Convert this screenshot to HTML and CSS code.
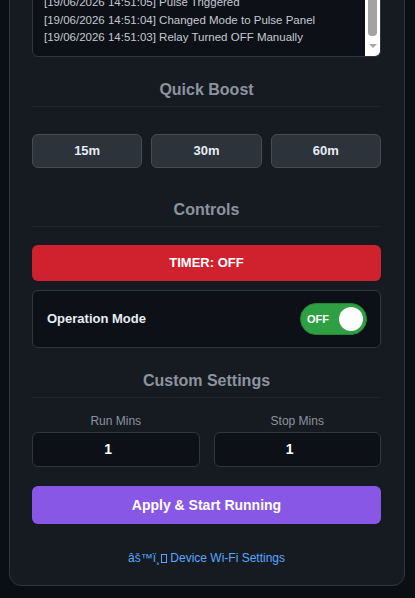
FILE: index.html
```html
<!DOCTYPE html>
<html lang="en">
<head>
<meta charset="utf-8">
<title>Pulse Panel</title>
<link rel="stylesheet" href="styles.css">
</head>
<body>
<div class="card">
  <h1 class="title">Pulse Panel Controller</h1>
  <div class="status">Relay: <b>OFF</b> &middot; Mode: Pulse Panel</div>
  <h2 class="heading">Activity Log</h2>
  <div class="log">
    <div class="log-lines">
      <div>[19/06/2026 14:51:09] Pulse Triggered</div>
      <div>[19/06/2026 14:51:08] Pulse Triggered</div>
      <div>[19/06/2026 14:51:07] Pulse Triggered</div>
      <div>[19/06/2026 14:51:06] Pulse Triggered</div>
      <div>[19/06/2026 14:51:05] Pulse Triggered</div>
      <div>[19/06/2026 14:51:04] Changed Mode to Pulse Panel</div>
      <div>[19/06/2026 14:51:03] Relay Turned OFF Manually</div>
    </div>
    <div class="sbar"><div class="thumb"></div><div class="arrow"></div></div>
  </div>

  <h2 class="heading">Quick Boost</h2>
  <div class="boost">
    <button class="btn">15m</button>
    <button class="btn">30m</button>
    <button class="btn">60m</button>
  </div>

  <h2 class="heading">Controls</h2>
  <button class="timer">TIMER: OFF</button>
  <div class="mode">
    <span class="mode-label">Operation Mode</span>
    <div class="toggle"><span class="toggle-text">OFF</span><span class="knob"></span></div>
  </div>

  <h2 class="heading">Custom Settings</h2>
  <div class="fields">
    <label class="field"><span class="field-label">Run Mins</span><input class="input" type="number" value="1"></label>
    <label class="field"><span class="field-label">Stop Mins</span><input class="input" type="number" value="1"></label>
  </div>
  <button class="apply">Apply &amp; Start Running</button>
  <a class="wifi" href="#">âš™ï¸<span class="tofu"></span> Device Wi-Fi Settings</a>
</div>
<script src="app.js"></script>
</body>
</html>
```
FILE: styles.css
```css
* { box-sizing: border-box; }
html, body { margin: 0; }
body {
  background: #0b0e13;
  font-family: "Liberation Sans", Arial, sans-serif;
  color: #c9d1d9;
  padding: 12px 0 12px 9px;
}
.card {
  width: 396px;
  background: #161b22;
  border: 1px solid #30363d;
  border-radius: 12px;
  padding: 16px 23px 20px 22px;
  display: flex;
  flex-direction: column;
}
.title { margin: 0 0 8px; font-size: 20px; text-align: center; color: #e6edf3; }
.status { text-align: center; font-size: 13px; color: #8b949e; margin-bottom: 8px; }
.heading {
  margin: 23px 0 0;
  font-size: 16px;
  line-height: 19px;
  font-weight: bold;
  color: #8b949e;
  text-align: center;
  padding-bottom: 7px;
  border-bottom: 1px solid #21262d;
}
.log {
  margin-top: 18px;
  display: flex;
  background: #0d1117;
  border: 1px solid #30363d;
  border-radius: 6px;
  overflow: hidden;
}
.log-lines {
  flex: 1;
  padding: 6px 10px 9px 11px;
  font-size: 11.5px;
  line-height: 17.5px;
  color: #c4c9d0;
}
.sbar {
  width: 15px;
  background: #fff;
  display: flex;
  flex-direction: column;
  align-items: center;
  padding: 10px 0 8px;
}
.thumb { flex: 1; width: 9px; background: #a3a3a3; border-radius: 0 0 4px 4px; margin-bottom: 8px; }
.arrow { width: 0; height: 0; border-left: 4px solid transparent; border-right: 4px solid transparent; border-top: 4px solid #a3a3a3; }
.boost {
  margin-top: 27px;
  display: grid;
  grid-template-columns: 1fr 1fr 1fr;
  gap: 9px;
}
.btn {
  height: 34px;
  background: #2d333b;
  border: 1px solid #444c56;
  border-radius: 6px;
  color: #e6edf3;
  font-family: inherit;
  font-weight: bold;
  font-size: 13px;
}
.boost + .heading { margin-top: 32px; }
.timer {
  margin-top: 18px;
  height: 36px;
  background: #cf222e;
  border: none;
  border-radius: 6px;
  color: #fff;
  font-family: inherit;
  font-weight: bold;
  font-size: 13px;
}
.mode {
  margin-top: 9px;
  height: 58px;
  background: #0d1117;
  border: 1px solid #30363d;
  border-radius: 6px;
  display: flex;
  align-items: center;
  justify-content: space-between;
  padding: 0 13px 0 14px;
}
.mode-label { font-size: 13px; font-weight: bold; color: #e6edf3; }
.toggle {
  width: 67px;
  height: 32px;
  border-radius: 16px;
  background: #2ea043;
  border: 1px solid #238636;
  display: flex;
  align-items: center;
  justify-content: space-between;
  padding: 0 3px 0 6px;
}
.toggle-text { font-size: 11px; font-weight: bold; color: #fff; }
.knob { width: 24px; height: 24px; border-radius: 50%; background: #fff; }
.fields {
  margin-top: 16px;
  display: grid;
  grid-template-columns: 1fr 1fr;
  gap: 14px;
}
.field { display: flex; flex-direction: column; align-items: stretch; min-width: 0; }
.field-label { text-align: center; font-size: 12px; line-height: 14px; color: #8b949e; margin-bottom: 4px; }
.input {
  height: 35px;
  background: #0d1117;
  border: 1px solid #30363d;
  border-radius: 6px;
  color: #fff;
  text-align: center;
  font-family: inherit;
  font-weight: bold;
  font-size: 14px;
  width: 100%;
  color-scheme: dark;
}
.apply {
  margin-top: 19px;
  height: 38px;
  background: #8957e5;
  border: none;
  border-radius: 6px;
  color: #fff;
  font-family: inherit;
  font-weight: bold;
  font-size: 14px;
}
.wifi {
  margin-top: 27px;
  align-self: center;
  font-size: 12px;
  line-height: 14px;
  color: #58a6ff;
  text-decoration: none;
}
.tofu {
  display: inline-block;
  width: 6px;
  height: 9px;
  border: 1px solid #58a6ff;
  margin-left: 1px;
  vertical-align: -1px;
}
```
FILE: app.js
```js
window.scrollTo(0, document.documentElement.scrollHeight);
```
